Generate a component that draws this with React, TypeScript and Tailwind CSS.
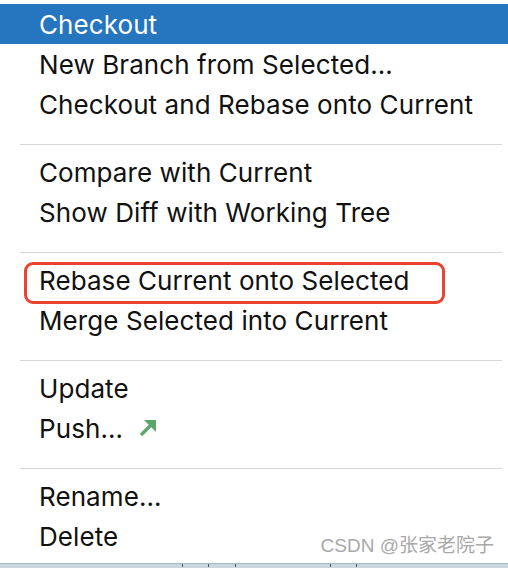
const FONT = "font-['Inter','Liberation_Sans',sans-serif]";

type Item = { label: string; active?: boolean; push?: boolean; marked?: boolean };

const GROUPS: Item[][] = [
  [
    { label: "Checkout", active: true },
    { label: "New Branch from Selected..." },
    { label: "Checkout and Rebase onto Current" },
  ],
  [{ label: "Compare with Current" }, { label: "Show Diff with Working Tree" }],
  [{ label: "Rebase Current onto Selected", marked: true }, { label: "Merge Selected into Current" }],
  [{ label: "Update" }, { label: "Push...", push: true }],
  [{ label: "Rename..." }, { label: "Delete" }],
];

function PushArrow() {
  return (
    <svg width="20" height="18" viewBox="0 0 20 18" className="ml-[14px]">
      <polygon points="7,1 19,1 19,13" fill="#59a869" />
      <line x1="16" y1="4" x2="4" y2="16" stroke="#59a869" strokeWidth="3.4" />
    </svg>
  );
}

function MenuRow({ item }: { item: Item }) {
  return (
    <div
      className={`relative flex h-10 items-center pl-[39px] text-[26px] tracking-[0.08px] ${
        item.active ? "bg-[#2675bf] text-white" : "text-[#111]"
      }`}
    >
      <span>{item.label}</span>
      {item.push && <PushArrow />}
      {item.marked && (
        <div className="pointer-events-none absolute left-[24px] top-[2px] h-[42px] w-[421px] rounded-[9px] border-[3px] border-[#e8432f]" />
      )}
    </div>
  );
}

export default function App() {
  return (
    <div className={`relative flex h-[568px] w-[508px] flex-col overflow-hidden bg-white ${FONT}`}>
      <div className="flex-1 pt-1">
        {GROUPS.map((group, gi) => (
          <div key={gi}>
            {gi > 0 && (
              <div className="pb-[7px] pl-5 pr-[6px] pt-5">
                <div className="h-px bg-[#d6d6d6]" />
              </div>
            )}
            {group.map((item) => (
              <MenuRow key={item.label} item={item} />
            ))}
          </div>
        ))}
      </div>

      {/* bottom edge of the window behind the menu */}
      <div className="flex h-[5px] items-start border-t border-[#a9b9c2] bg-[#c9d7de] pl-[182px]">
        <div className="h-[3px] w-px bg-[#555]" />
        <div className="ml-[25px] h-[3px] w-px bg-[#555]" />
        <div className="ml-[26px] h-[3px] w-px bg-[#555]" />
        <div className="ml-[94px] h-[3px] w-px bg-[#555]" />
        <div className="ml-[25px] h-[3px] w-px bg-[#555]" />
      </div>

      <div className="absolute bottom-[8px] right-[14px] font-['Liberation_Sans','Noto_Sans_CJK_SC',sans-serif] text-[19px] text-[#a8a8a8] [text-shadow:0_0_1px_#fff]">
        CSDN @张家老院子
      </div>
    </div>
  );
}
